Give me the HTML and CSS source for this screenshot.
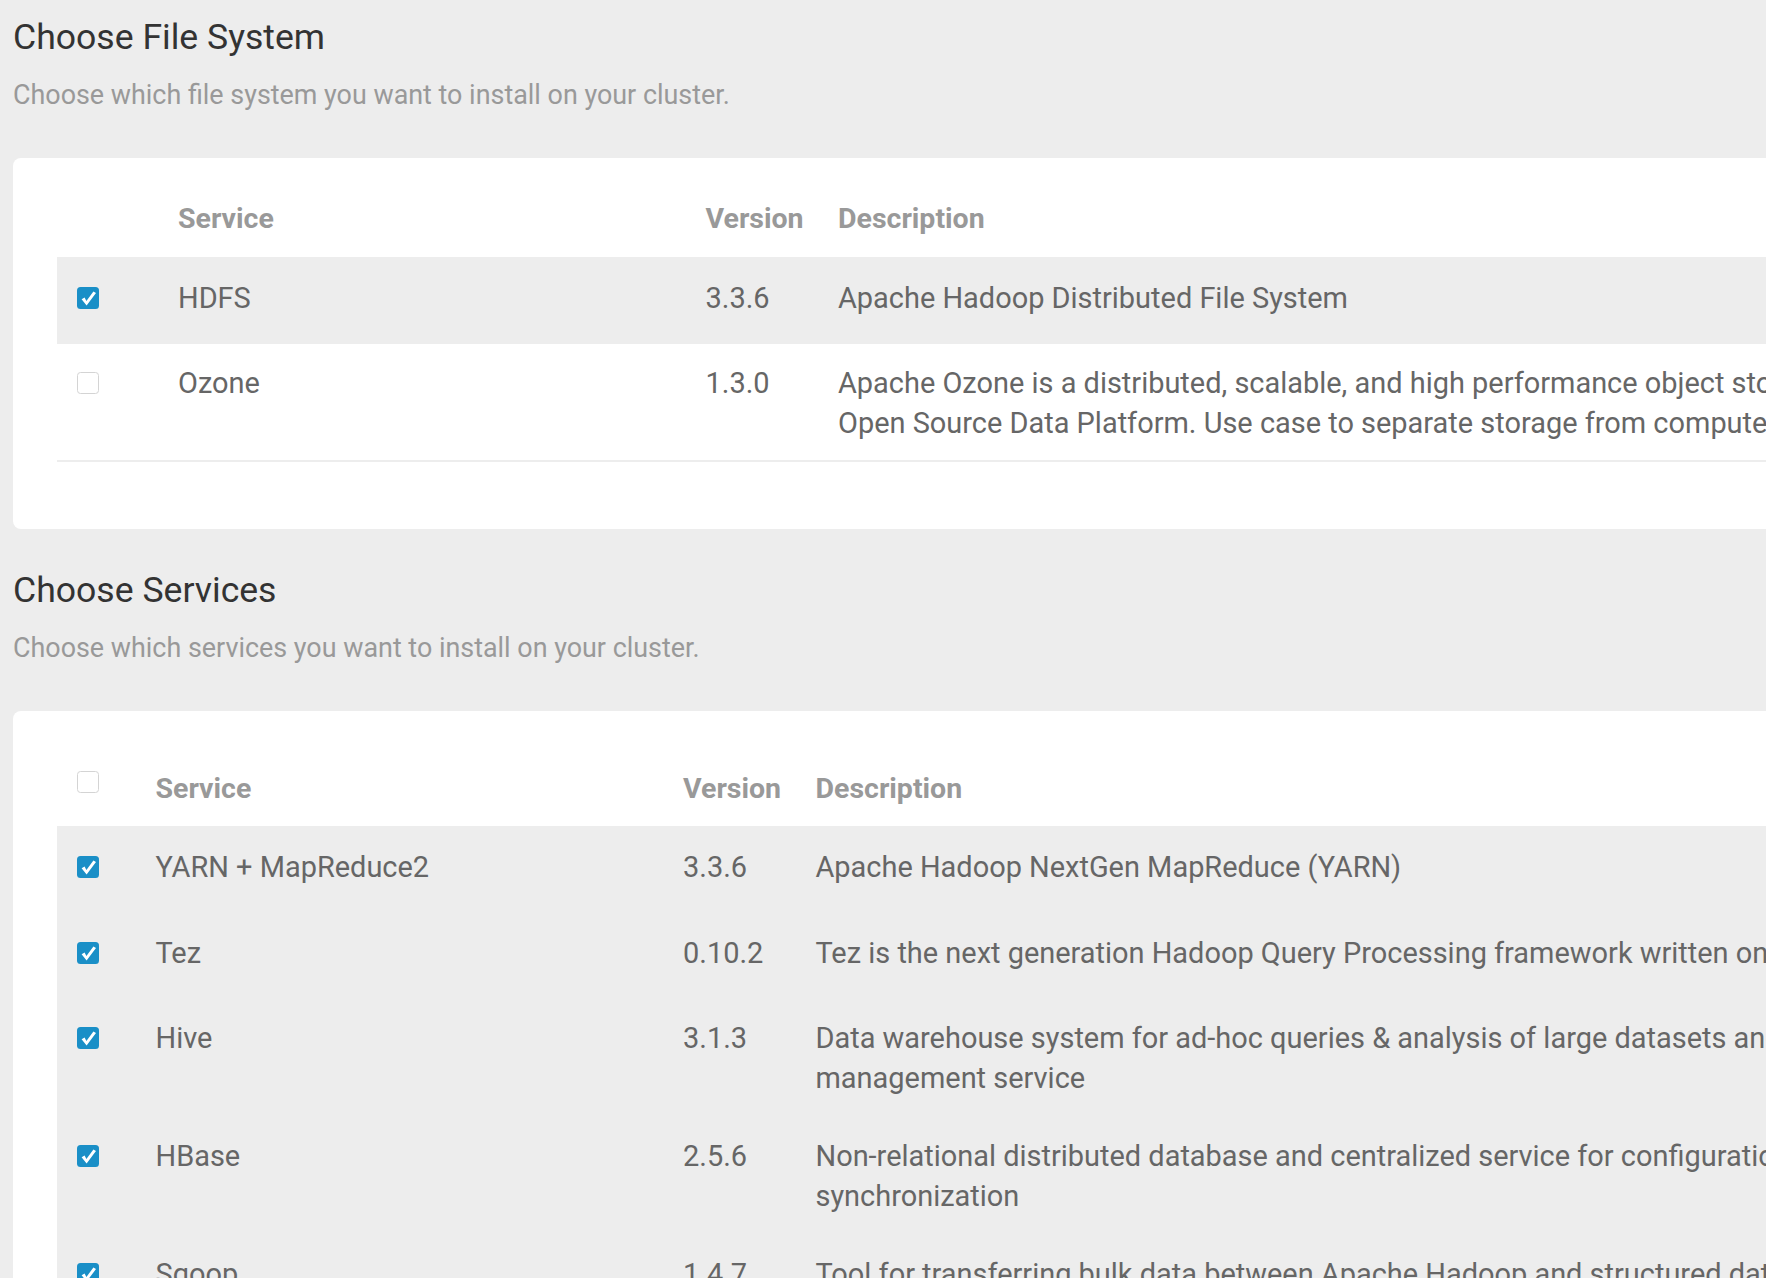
FILE: index.html
```html
<!DOCTYPE html>
<html lang="en">
<head>
<meta charset="utf-8">
<title>Choose Services</title>
<link rel="stylesheet" href="styles.css">
</head>
<body>
<div class="page">

  <section class="section">
    <h2 class="title">Choose File System</h2>
    <p class="subtitle">Choose which file system you want to install on your cluster.</p>
    <div class="card">
      <table class="svc-table">
        <colgroup>
          <col class="col-check col-check-wide">
          <col class="col-service">
          <col class="col-version">
          <col class="col-desc">
        </colgroup>
        <thead>
          <tr>
            <th class="th-check"></th>
            <th>Service</th>
            <th>Version</th>
            <th>Description</th>
          </tr>
        </thead>
        <tbody>
          <tr class="selected">
            <td><span class="cb cb-on"><svg viewBox="0 0 22 22" width="22" height="22"><rect x="0" y="0" width="22" height="22" rx="3.5" fill="#1a8fc7"/><path d="M4.6 12.2 L7.6 10.6 L9.4 14.1 L16.4 4.4 L19 6.1 L9.6 18.4 Z" fill="#fff"/></svg></span></td>
            <td>HDFS</td>
            <td>3.3.6</td>
            <td class="desc">Apache Hadoop Distributed File System</td>
          </tr>
          <tr class="last">
            <td><span class="cb cb-off"></span></td>
            <td>Ozone</td>
            <td>1.3.0</td>
            <td class="desc">Apache Ozone is a distributed, scalable, and high performance object store for the<br>Open Source Data Platform. Use case to separate storage from compute.</td>
          </tr>
        </tbody>
      </table>
    </div>
  </section>

  <section class="section">
    <h2 class="title">Choose Services</h2>
    <p class="subtitle">Choose which services you want to install on your cluster.</p>
    <div class="card">
      <table class="svc-table">
        <colgroup>
          <col class="col-check">
          <col class="col-service">
          <col class="col-version">
          <col class="col-desc">
        </colgroup>
        <thead>
          <tr>
            <th class="th-check"><span class="cb cb-off cb-head"></span></th>
            <th>Service</th>
            <th>Version</th>
            <th>Description</th>
          </tr>
        </thead>
        <tbody>
          <tr class="selected">
            <td><span class="cb cb-on"><svg viewBox="0 0 22 22" width="22" height="22"><rect x="0" y="0" width="22" height="22" rx="3.5" fill="#1a8fc7"/><path d="M4.6 12.2 L7.6 10.6 L9.4 14.1 L16.4 4.4 L19 6.1 L9.6 18.4 Z" fill="#fff"/></svg></span></td>
            <td>YARN + MapReduce2</td>
            <td>3.3.6</td>
            <td class="desc">Apache Hadoop NextGen MapReduce (YARN)</td>
          </tr>
          <tr class="selected">
            <td><span class="cb cb-on"><svg viewBox="0 0 22 22" width="22" height="22"><rect x="0" y="0" width="22" height="22" rx="3.5" fill="#1a8fc7"/><path d="M4.6 12.2 L7.6 10.6 L9.4 14.1 L16.4 4.4 L19 6.1 L9.6 18.4 Z" fill="#fff"/></svg></span></td>
            <td>Tez</td>
            <td>0.10.2</td>
            <td class="desc">Tez is the next generation Hadoop Query Processing framework written on top of YARN.</td>
          </tr>
          <tr class="selected">
            <td><span class="cb cb-on"><svg viewBox="0 0 22 22" width="22" height="22"><rect x="0" y="0" width="22" height="22" rx="3.5" fill="#1a8fc7"/><path d="M4.6 12.2 L7.6 10.6 L9.4 14.1 L16.4 4.4 L19 6.1 L9.6 18.4 Z" fill="#fff"/></svg></span></td>
            <td>Hive</td>
            <td>3.1.3</td>
            <td class="desc">Data warehouse system for ad-hoc queries &amp; analysis of large datasets and table &amp; storage<br>management service</td>
          </tr>
          <tr class="selected">
            <td><span class="cb cb-on"><svg viewBox="0 0 22 22" width="22" height="22"><rect x="0" y="0" width="22" height="22" rx="3.5" fill="#1a8fc7"/><path d="M4.6 12.2 L7.6 10.6 L9.4 14.1 L16.4 4.4 L19 6.1 L9.6 18.4 Z" fill="#fff"/></svg></span></td>
            <td>HBase</td>
            <td>2.5.6</td>
            <td class="desc">Non-relational distributed database and centralized service for configuration management &amp;<br>synchronization</td>
          </tr>
          <tr class="selected">
            <td><span class="cb cb-on"><svg viewBox="0 0 22 22" width="22" height="22"><rect x="0" y="0" width="22" height="22" rx="3.5" fill="#1a8fc7"/><path d="M4.6 12.2 L7.6 10.6 L9.4 14.1 L16.4 4.4 L19 6.1 L9.6 18.4 Z" fill="#fff"/></svg></span></td>
            <td>Sqoop</td>
            <td>1.4.7</td>
            <td class="desc">Tool for transferring bulk data between Apache Hadoop and structured data stores such as relational databases</td>
          </tr>
          <tr class="selected last">
            <td><span class="cb cb-on"><svg viewBox="0 0 22 22" width="22" height="22"><rect x="0" y="0" width="22" height="22" rx="3.5" fill="#1a8fc7"/><path d="M4.6 12.2 L7.6 10.6 L9.4 14.1 L16.4 4.4 L19 6.1 L9.6 18.4 Z" fill="#fff"/></svg></span></td>
            <td>ZooKeeper</td>
            <td>3.5.9</td>
            <td class="desc">Centralized service which provides highly reliable distributed coordination</td>
          </tr>
        </tbody>
      </table>
    </div>
  </section>

</div>
</body>
</html>
```
FILE: styles.css
```css
html, body {
  margin: 0;
  padding: 0;
  overflow: hidden;
  background: #ededed;
}

body {
  font-family: Roboto, "Liberation Sans", Arial, sans-serif;
  color: #666;
}

.page {
  width: 2600px;
  padding: 18px 0 0 13px;
}

.title {
  margin: 0 0 18px;
  font-size: 35.6px;
  line-height: 39px;
  font-weight: 400;
  color: #333;
}

.subtitle {
  margin: 0 0 42.5px;
  font-size: 26.9px;
  line-height: 40px;
  color: #999;
}

.card {
  background: #fff;
  border-radius: 8px;
  padding: 22.7px 0 66.7px 44.3px;
  margin-bottom: 42.3px;
}

.svc-table {
  width: 2500px;
  table-layout: fixed;
  border-collapse: separate;
  border-spacing: 0;
  font-size: 28.95px;
  line-height: 40px;
}

.col-check { width: 78.2px; }
.col-check-wide { width: 100.7px; }
.col-service { width: 527.5px; }
.col-version { width: 132.5px; }

.svc-table th {
  padding: 19px 20px 17.6px;
  text-align: left;
  vertical-align: bottom;
  font-size: 28.5px;
  font-weight: 700;
  color: #999;
}

.svc-table td {
  padding: 19px 20px 17px;
  vertical-align: top;
  border-top: 2px solid #ededed;
  color: #666;
}

.svc-table tr.last td {
  border-bottom: 2px solid #ededed;
}

.svc-table tr.selected td {
  background: #ededed;
}

.desc {
  white-space: nowrap;
}

.cb {
  display: block;
  width: 22px;
  height: 22px;
  margin: 9px 0 16.5px;
  box-sizing: border-box;
  border-radius: 3.5px;
}

.cb svg {
  display: block;
}

.cb-off {
  background: #fff;
  border: 1.7px solid #d4d4d4;
}

.cb-head {
  margin: 18.3px 0 16px;
}
```
